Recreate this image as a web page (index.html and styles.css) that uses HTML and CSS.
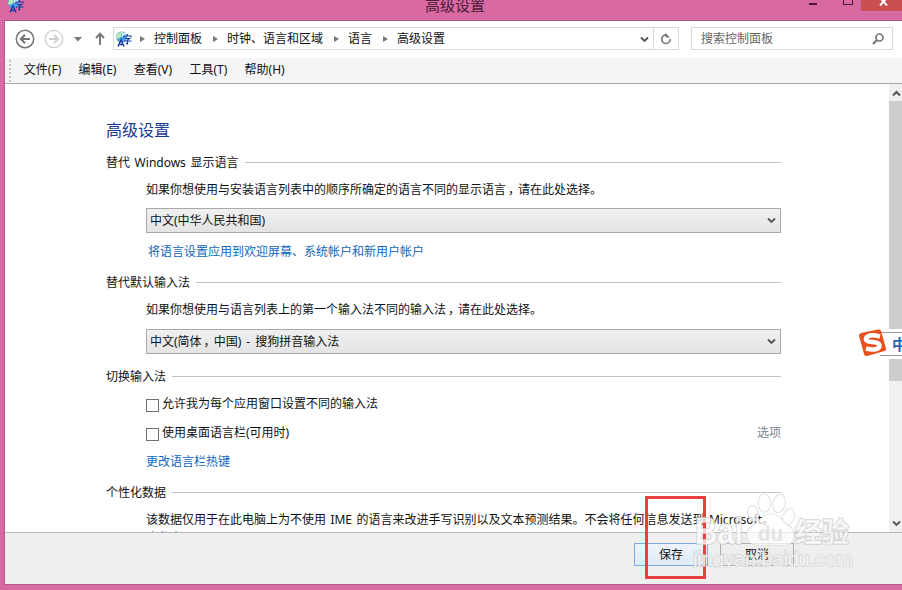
FILE: index.html
```html
<!DOCTYPE html>
<html lang="zh-CN">
<head>
  <meta charset="UTF-8" />
  <title>高级设置</title>
  <link rel="stylesheet" href="styles.css">
</head>
<body>
  <svg width="0" height="0" class="defs">
    <symbol id="lang" viewBox="0 0 17 16">
      <circle cx="6.500" cy="6" r="5.500" fill="#4a9fe0" />
      <path d="M2 3.500Q5 0 9 1L6 3 7 5 3 8 1 7Z" fill="#b9ecb4" />
      <path d="M7 1.500l4 1 0 2.500-4 1z" fill="#c4ebf8" />
      <path d="M3 15.500L6 9l3 6.500M4 13.500h4" stroke="#1b3fa6" stroke-width="1.500" fill="none" />
      <path d="M12.300 3v1.500M9 6.500V5h7v1.500M10 7.500h4.500L12.500 9v4l-1.500-.5M9 10h7.500" stroke="#1b3fa6" stroke-width="1.200" fill="none" />
    </symbol>
    <symbol id="down" viewBox="0 0 9 7"><path d="M1 1.500L4.500 5 8 1.500" stroke="#555" stroke-width="1.900" fill="none" /></symbol>
  </svg>

  <header class="titlebar">
    <svg class="app-icon" width="17" height="16"><use href="#lang" /></svg>
    <h1>高级设置</h1>
    <div class="controls">
      <span class="min"></span>
      <span class="max"></span>
      <span class="close"><svg width="9" height="8"><path d="M1 0l7 7.500M8 0L1 7.500" stroke="#fff" stroke-width="1.900" /></svg></span>
    </div>
  </header>

  <div class="window">
    <nav class="navbar">
      <svg class="back" width="20" height="20" viewBox="0 0 20 20" fill="none" stroke="#757575"><circle cx="10" cy="10" r="8.700" stroke-width="1.500" /><path d="M15 10H6M10 5.800L5.800 10l4.200 4.200" stroke-width="2" /></svg>
      <svg class="forward" width="20" height="20" viewBox="0 0 20 20" fill="none" stroke="#cfcfcf"><circle cx="10" cy="10" r="8.700" stroke-width="1.300" /><path d="M5 10h9M10 5.800l4.200 4.200L10 14.200" stroke-width="1.800" /></svg>
      <svg class="recent" width="8" height="5"><path d="M0 0h8L4 4.500z" fill="#777" /></svg>
      <svg class="up" width="10" height="13"><path d="M5 13V2M1 6l4-4.300L9 6" stroke="#777" stroke-width="1.900" fill="none" /></svg>
      <div class="address">
        <svg width="17" height="16"><use href="#lang" /></svg>
        <i></i><span>控制面板</span>
        <i></i><span>时钟、语言和区域</span>
        <i></i><span>语言</span>
        <i></i><span>高级设置</span>
        <svg class="history" width="9" height="7"><use href="#down" /></svg>
        <div class="refresh"><svg width="12" height="12" viewBox="0 0 12 12"><path d="M7 2A4.300 4.300 0 1 0 10.300 6" stroke="#777" stroke-width="1.600" fill="none" /><path d="M5.500 0v4.500h4.500z" fill="#777" /></svg></div>
      </div>
      <div class="search">
        <span>搜索控制面板</span>
        <svg width="12" height="12" viewBox="0 0 12 12" fill="none" stroke="#777"><circle cx="7.500" cy="4.500" r="3.500" stroke-width="1.700" /><path d="M5 7L1 11" stroke-width="2.300" /></svg>
      </div>
    </nav>

    <div class="menubar">
      <span>文件(F)</span><span>编辑(E)</span><span>查看(V)</span><span>工具(T)</span><span>帮助(H)</span>
    </div>

    <div class="body">
      <main class="content">
        <h2>高级设置</h2>

        <section>
          <h3>替代 Windows 显示语言</h3>
          <p>如果你想使用与安装语言列表中的顺序所确定的语言不同的显示语言<b class="comma">，</b>请在此处选择。</p>
          <div class="select">中文(中华人民共和国)<svg width="9" height="7"><use href="#down" /></svg></div>
          <a class="welcome">将语言设置应用到欢迎屏幕、系统帐户和新用户帐户</a>
        </section>

        <section>
          <h3>替代默认输入法</h3>
          <p>如果你想使用与语言列表上的第一个输入法不同的输入法<b class="comma">，</b>请在此处选择。</p>
          <div class="select second"><span>中文(简体<b class="comma">，</b>中国) - 搜狗拼音输入法</span><svg width="9" height="7"><use href="#down" /></svg></div>
        </section>

        <section class="switching">
          <h3>切换输入法</h3>
          <div class="check"><span class="box"></span>允许我为每个应用窗口设置不同的输入法</div>
          <div class="check"><span class="box"></span>使用桌面语言栏(可用时)<span class="options">选项</span></div>
          <a>更改语言栏热键</a>
        </section>

        <section class="personal">
          <h3>个性化数据</h3>
          <p>该数据仅用于在此电脑上为不使用 IME 的语言来改进手写识别以及文本预测结果。不会将任何信息发送到 Microsoft。</p>
          <a>隐私声明</a>
        </section>
      </main>
      <div class="scrollbar">
        <svg width="9" height="7"><path d="M1 5.500L4.500 2 8 5.500" stroke="#555" stroke-width="2" fill="none" /></svg>
        <div class="thumb"></div>
        <svg class="scroll-down" width="9" height="7"><use href="#down" /></svg>
      </div>
    </div>

    <footer>
      <div class="btn primary">保存</div>
      <div class="btn">取消</div>
    </footer>
  </div>

  <!-- sogou input method bar -->
  <div class="ime">
    <svg width="30" height="28" viewBox="0 0 30 28"><path d="M1 6.500Q1 4.500 3 4L20 .5Q22.500 0 23 2L28 19.500Q28.300 21.500 26.500 22L9 27Q6.500 27.500 6 25Z" fill="#e94f1d" /><path d="M22 7.500Q10 4.500 8 9.500C7 14.500 21 11.500 21.500 16.500 21.500 21.500 13 21 8 19.500" stroke="#fff" stroke-width="4.600" fill="none" /></svg>
    <span>中</span>
  </div>

  <div class="highlight"></div>

  <svg class="watermark" width="170" height="88" viewBox="0 0 170 88">
    <g class="paw">
      <ellipse cx="72.500" cy="23" rx="6" ry="9" />
      <ellipse cx="87" cy="23.500" rx="6" ry="9" transform="rotate(12 87 23.500)" />
      <ellipse cx="61" cy="33.500" rx="5" ry="8" transform="rotate(-12 61 33.500)" />
      <ellipse cx="96.500" cy="37" rx="5.500" ry="8.500" transform="rotate(20 96.500 37)" />
      <path d="M79 34C71 34 68 41 60 46 51 53 54 65 66 65L92 65C104 65 105 52 97 46 90 41 88 34 79 34Z" />
    </g>
    <text class="wm-bai" x="3" y="64" textLength="48" lengthAdjust="spacingAndGlyphs">Bai</text>
    <text class="wm-du" x="66" y="61" textLength="25" lengthAdjust="spacingAndGlyphs">du</text>
    <text class="wm-cjk" x="103" y="62">经验</text>
    <text class="wm-url" x="1" y="86" textLength="160">jingyan.baidu.com</text>
  </svg>
</body>
</html>
```

FILE: styles.css
```css
* {
  box-sizing: border-box;
  margin: 0;
  padding: 0;
}
body {
  width: 902px;
  height: 590px;
  overflow: hidden;
  position: relative;
  background: #d969a2;
  font-family: "Noto Sans", "Noto Sans CJK SC", sans-serif;
  font-size: 12px;
  line-height: 20px;
  color: #111;
}
svg {
  display: block;
  flex: none;
}
.defs {
  position: absolute;
}
.titlebar {
  height: 20px;
  display: flex;
  align-items: flex-start;
}
.app-icon {
  margin: -3px 0 0 7px;
}
.titlebar h1 {
  margin: -5px 0 0 401px;
  font-size: 15px;
  font-weight: 400;
  color: #4d1c38;
}
.controls {
  margin-left: auto;
  display: flex;
}
.min {
  width: 8px;
  height: 2px;
  margin: 3px 26px 0 0;
  background: #4b1734;
}
.max {
  width: 10px;
  height: 5px;
  margin-right: 8px;
  border: 1px solid #4b1734;
  border-top: none;
}
.close {
  width: 41px;
  height: 11px;
  padding: 0 0 0 18px;
  overflow: hidden;
  background: #c9504f;
}
.close svg {
  margin-top: -2px;
}
.window {
  height: 565px;
  margin-left: 4px;
  border-top: 1px solid #a5557f;
  border-left: 1px solid #b65a88;
  border-bottom: 1px solid #b65a88;
  background: #fff;
  display: flex;
  flex-direction: column;
}
.navbar {
  height: 37px;
  padding: 6px 9px 0 10px;
  display: flex;
}
.back {
  margin-top: 2px;
}
.forward {
  margin: 2px 0 0 9px;
}
.recent {
  margin: 10px 0 0 10px;
}
.up {
  margin: 5px 0 0 13px;
}
.address {
  width: 566px;
  height: 23px;
  margin-left: 8px;
  padding-left: 1px;
  border: 1px solid #d9d9d9;
  display: flex;
  align-items: center;
}
.address i {
  margin: 1px 9px 0 8px;
  border-left: 5px solid #777;
  border-top: 3.5px solid transparent;
  border-bottom: 3.5px solid transparent;
}
.address span {
  margin-right: 3px;
}
.history {
  margin: 1px 4px 0 auto;
}
.refresh {
  width: 25px;
  height: 21px;
  padding: 5px 6px;
  border-left: 1px solid #d9d9d9;
}
.search {
  flex: 1;
  height: 23px;
  margin-left: 12px;
  padding: 0 8px 0 9px;
  border: 1px solid #d9d9d9;
  display: flex;
  align-items: center;
  justify-content: space-between;
  color: #666;
}
.menubar {
  height: 26px;
  padding-left: 4px;
  background: #f4f5f6;
  border-bottom: 1px solid #aaa;
  display: flex;
  gap: 17.3px;
  line-height: 24px;
}
.menubar::before {
  content: "";
  height: 22px;
  margin: 2px -4.5px 0 0;
  border-left: 2px dotted #c4c4c4;
}
.body {
  height: 448px;
  display: flex;
  overflow: hidden;
}
.content {
  width: 776px;
  padding: 36px 0 0 101px;
  white-space: nowrap;
}
.content h2 {
  font-size: 16px;
  font-weight: 400;
  color: #1a3a94;
}
.content h3 {
  font-size: 12px;
  font-weight: 400;
  word-spacing: 1.5px;
  display: flex;
  align-items: center;
  gap: 6px;
}
.content h3::after {
  content: "";
  flex: 1;
  height: 1px;
  margin-top: -2px;
  background: #c3c3c3;
}
section {
  padding-top: 13px;
}
section + section {
  padding-top: 11px;
}
section.switching {
  padding-top: 13px;
}
section p {
  margin: 7px 0 0 40px;
  word-spacing: 1.3px;
}
section a {
  display: block;
  margin-left: 40px;
  color: #1166bb;
}
.comma {
  font-weight: 400;
  margin: 0 -2px 0 2px;
}
.select {
  height: 25px;
  margin: 8px 0 0 40px;
  padding: 0 4px 0 3px;
  border: 1px solid #a9a9a9;
  background: linear-gradient(#f0f0f0, #e4e4e4);
  display: flex;
  align-items: center;
}
.select svg {
  margin-left: auto;
}
.select.second {
  margin-top: 9px;
  word-spacing: 2px;
}
a.welcome {
  margin: 9px 0 0 42px;
}
.check {
  margin: 7px 0 0 40px;
  display: flex;
  align-items: center;
}
.check + .check {
  margin-top: 9px;
}
.box {
  width: 13px;
  height: 13px;
  margin: 3px 3px 0 0;
  border: 1px solid #707070;
}
.options {
  margin-left: auto;
  color: #7a8694;
}
.check + a {
  margin-top: 9px;
}
.personal a {
  margin-top: -2px;
}
.scrollbar {
  width: 13px;
  margin-left: auto;
  background: #f0f0f0;
  overflow: hidden;
  display: flex;
  flex-direction: column;
}
.scrollbar svg {
  margin: 6px 0 4px 3px;
}
.thumb {
  height: 280px;
  background: #cdcdcd;
}
.scrollbar .scroll-down {
  margin: auto 0 5px 3px;
}
footer {
  flex: 1;
  border-top: 1px solid #b8b8b8;
  background: #efefef;
  padding: 10px 0 0 629px;
  display: flex;
  gap: 12px;
}
.btn {
  width: 74px;
  height: 23px;
  border: 1px solid #adadad;
  background: linear-gradient(#f1f1f1, #e6e6e6);
  text-align: center;
  line-height: 21px;
}
.btn.primary {
  border-color: #80abd9;
  background: linear-gradient(#edf4fb, #dfebf8);
}
.ime {
  position: absolute;
  left: 880px;
  top: 332px;
  width: 30px;
  height: 24px;
  background: #fff;
  border: 1px solid #999;
  border-left: none;
  box-shadow: 0 0 0 3px #fff;
}
.ime svg {
  position: absolute;
  left: -22px;
  top: -4px;
}
.ime span {
  position: absolute;
  left: 12px;
  top: 1px;
  font-size: 15px;
  font-weight: 700;
  color: #2269ad;
}
.highlight {
  position: absolute;
  left: 645px;
  top: 496px;
  width: 61px;
  height: 83px;
  border: 3px solid #e93f3f;
}
.watermark {
  position: absolute;
  left: 692px;
  top: 480px;
  fill: #fff;
  fill-opacity: .7;
  stroke: #cfcfcf;
  stroke-opacity: .8;
  paint-order: stroke;
}
.paw {
  stroke-width: 1.2;
}
.wm-bai {
  font-family: "Liberation Sans", sans-serif;
  font-size: 36px;
  font-weight: 700;
  stroke-width: 2;
}
.wm-du {
  font-family: "Liberation Sans", sans-serif;
  font-size: 22px;
  font-weight: 700;
  fill: #d9d9d9;
  stroke: none;
}
.wm-cjk {
  font-family: "Noto Sans CJK SC", sans-serif;
  font-size: 27px;
  font-weight: 700;
  stroke-width: 2;
}
.wm-url {
  font-family: "Liberation Sans", sans-serif;
  font-size: 20px;
  stroke-width: 1.5;
}
```
